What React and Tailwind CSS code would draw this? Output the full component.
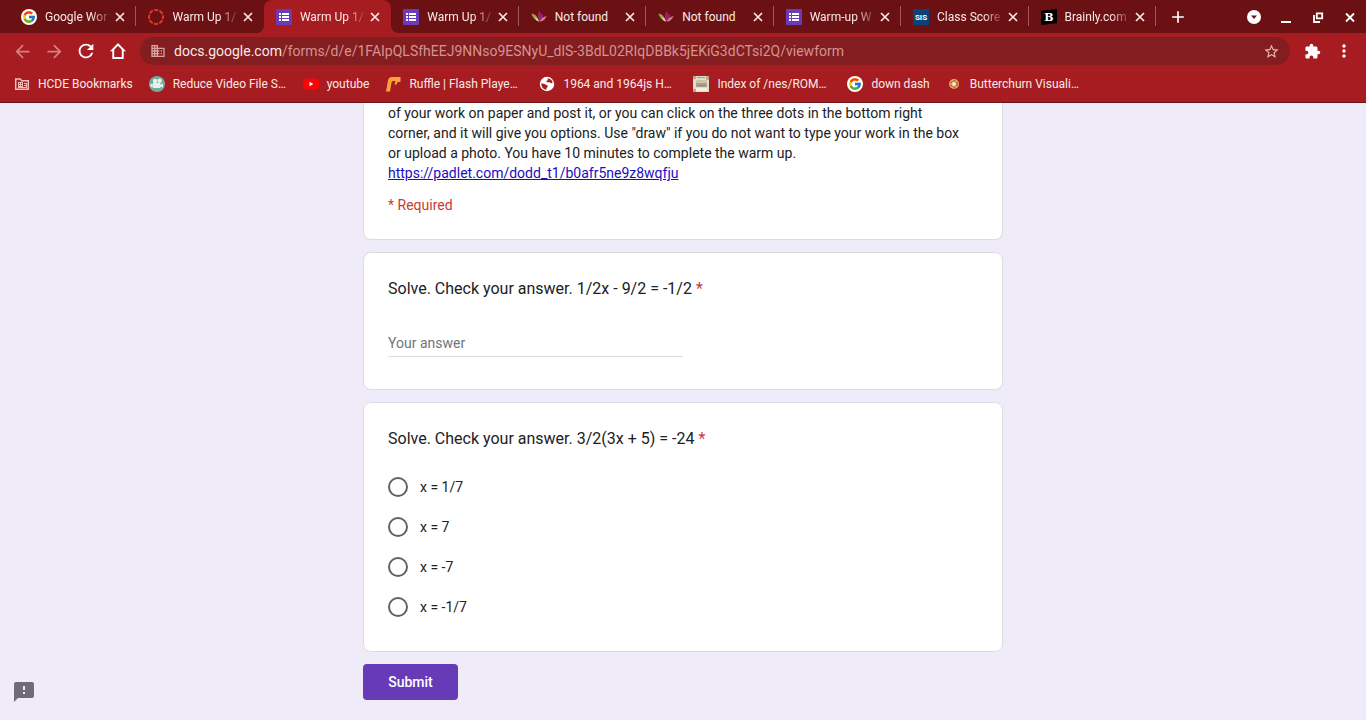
import { FcGoogle } from "react-icons/fc";
import {
  MdAdd,
  MdArrowBack,
  MdArrowForward,
  MdDomain,
  MdExtension,
  MdFeedback,
  MdMoreVert,
  MdRefresh,
  MdStarBorder,
} from "react-icons/md";

function GoogleIcon() {
  return (
    <span className="flex size-4 shrink-0 items-center justify-center rounded-full bg-white">
      <FcGoogle size={14} />
    </span>
  );
}

function CanvasIcon() {
  return (
    <svg viewBox="0 0 16 16" className="size-4 shrink-0" aria-hidden="true">
      <circle cx="8" cy="8" r="7" fill="none" stroke="#e2372f" strokeWidth="2" strokeDasharray="4.2 1.3" strokeDashoffset="2.1" />
    </svg>
  );
}

function FormsIcon() {
  return (
    <svg viewBox="0 0 16 16" className="size-4 shrink-0" aria-hidden="true">
      <rect width="16" height="16" rx="1" fill="#6a3ab8" />
      <path fill="#fff" d="M3 4h2v2H3zM6 4h7v2H6zM3 7h2v2H3zM6 7h7v2H6zM3 10h2v2H3zM6 10h7v2H6z" />
    </svg>
  );
}

function LotusIcon() {
  return (
    <svg viewBox="0 0 16 16" className="size-4 shrink-0" aria-hidden="true">
      <path fill="#9aa84a" d="M.5 4.500C4 5 6.500 7.500 8 12.500 4.500 11.500 1.500 8.500.5 4.500z" />
      <path fill="#e3d3b0" d="M4 8.500c2 .3 3.500 1.800 4 4-2-.4-3.500-1.800-4-4z" />
      <path fill="#b01762" d="M8.300 2c2.700 2.500 3 6.500.2 10.500C6.300 9 6.300 5.500 8.300 2z" />
      <path fill="#7d2a80" d="M11.500 4.500c1 3-.2 6.500-3 8 0-3.500.8-6 3-8z" />
      <path fill="#d9738c" d="M15.500 7c-1 3.500-3.500 5.500-7 5.500C10 9.500 12.300 7.500 15.500 7z" />
    </svg>
  );
}

function SisIcon() {
  return (
    <svg viewBox="0 0 16 16" className="size-4 shrink-0" aria-hidden="true">
      <rect width="16" height="16" fill="#0b4378" />
      <text x="8" y="11" textAnchor="middle" fill="#fff" fontSize="8" fontWeight="700" fontFamily="Roboto, sans-serif">SIS</text>
    </svg>
  );
}

function BrainlyIcon() {
  return (
    <svg viewBox="0 0 16 16" className="size-4 shrink-0" aria-hidden="true">
      <path fill="#000" d="M0 1.800L16 0v14.200L0 16z" />
      <text x="8" y="12" textAnchor="middle" fill="#fff" fontSize="11" fontWeight="700" fontFamily="DejaVu Serif, serif">B</text>
    </svg>
  );
}

function CloseIcon() {
  return (
    <svg viewBox="0 0 16 16" className="size-4" aria-hidden="true">
      <path d="M4 4l8 8M12 4l-8 8" stroke="currentColor" strokeWidth="1.700" />
    </svg>
  );
}

function FolderIcon() {
  return (
    <svg viewBox="0 0 16 16" className="size-4 shrink-0" aria-hidden="true">
      <path fill="none" stroke="#f0bfb9" strokeWidth="1.500" d="M1.700 3h4.500l1.500 1.700h6.600v8.600H1.700z" />
      <path fill="#f0bfb9" d="M4 6h5v6H4z" />
      <path fill="#a61c20" d="M5 7h1v1H5zM7 7h1v1H7zM5 9h1v1H5zM7 9h1v1H7z" />
      <path fill="#f0bfb9" d="M10 7h3v1h-3zM10 9h3v1h-3zM9 11h4v1H9zM12 7h1v5h-1z" />
    </svg>
  );
}

function VideoIcon() {
  return (
    <svg viewBox="0 0 16 16" className="size-4 shrink-0" aria-hidden="true">
      <circle cx="8" cy="8" r="8" fill="#6fae9c" />
      <circle cx="6" cy="5" r="2.200" fill="#e9f3ee" />
      <circle cx="10.500" cy="4.800" r="2.200" fill="#e9f3ee" />
      <rect x="3.500" y="7" width="8" height="5" rx="1" fill="#e9f3ee" />
      <path fill="#e9f3ee" d="M11 9l3-1.500v4L11 10.500zM1.500 7.500l2 1v2l-2 .8z" />
    </svg>
  );
}

function YoutubeIcon() {
  return (
    <svg viewBox="0 0 16 16" className="size-4 shrink-0" aria-hidden="true">
      <rect y="2.500" width="16" height="11" rx="3" fill="#fa0505" />
      <path fill="#fff" d="M6.500 5.800v4.400L10.300 8z" />
    </svg>
  );
}

function RuffleIcon() {
  return (
    <svg viewBox="0 0 16 16" className="size-4 shrink-0" aria-hidden="true">
      <path fill="#f9a43a" d="M1 15.500L3 4.500Q3.500 1 7 1h8.500v5h-3l-.7 2.500H9.500L10.500 5H8Q6.800 5 6.500 6.500L5 15.500z" />
    </svg>
  );
}

function GlobeIcon() {
  return (
    <svg viewBox="0 0 16 16" className="size-4 shrink-0" aria-hidden="true">
      <circle cx="8" cy="8" r="7.200" fill="#fff" />
      <path fill="#a61c20" d="M8.500 2.200c2.500.2 4.500 1.800 5.200 4-.8 1.400-2.200 1-2.700.3-.8-.9-2 .3-3.200-.4-.9-.7-.2-1.500.5-1.700.8-.3.500-1.200.2-2.200zM2.200 7.500c1.500 0 3.300.2 4.300 1 .8.7 2 .5 2.300 1.500.2 1-1 1.300-1.200 2.200-.1.700-.4 1.200-.8 1.500C4.200 13.200 2.200 10.800 2.200 7.500z" />
    </svg>
  );
}

function NesIcon() {
  return (
    <svg viewBox="0 0 16 16" className="size-4 shrink-0" aria-hidden="true">
      <rect width="16" height="16" fill="#e4dccb" />
      <path fill="#b9a98c" d="M0 0h3v3H0zM13 0h3v4h-3zM0 13h3v3H0z" />
      <path fill="#c98a78" d="M4 1h8v1H4z" />
      <rect x="3" y="4" width="11" height="4" rx="1" fill="#c9c3ab" />
      <rect x="3" y="7" width="11" height="4" fill="#a9a287" />
      <path stroke="#b8795e" strokeWidth="1" d="M5 9.500h7" />
      <path fill="#f3efe4" d="M3 12h11v3H3z" />
    </svg>
  );
}

function ButterchurnIcon() {
  return (
    <svg viewBox="0 0 16 16" className="size-4 shrink-0" aria-hidden="true">
      <circle cx="8" cy="8" r="5" fill="#e0a66a" />
      <circle cx="8" cy="8" r="3.200" fill="none" stroke="#8d3b22" strokeWidth="1" strokeDasharray="2 1.500" />
      <circle cx="8" cy="8" r="1.800" fill="#fff0d0" />
    </svg>
  );
}

const tabs = [
  { title: "Google Wor", Icon: GoogleIcon, fade: true },
  { title: "Warm Up 1/", Icon: CanvasIcon, fade: true },
  { title: "Warm Up 1/", Icon: FormsIcon, fade: true, active: true },
  { title: "Warm Up 1/", Icon: FormsIcon, fade: true },
  { title: "Not found", Icon: LotusIcon },
  { title: "Not found", Icon: LotusIcon },
  { title: "Warm-up W", Icon: FormsIcon, fade: true },
  { title: "Class Score", Icon: SisIcon, fade: true },
  { title: "Brainly.com", Icon: BrainlyIcon, fade: true },
];

const bookmarks = [
  { title: "HCDE Bookmarks", Icon: FolderIcon },
  { title: "Reduce Video File S…", Icon: VideoIcon, long: true },
  { title: "youtube", Icon: YoutubeIcon },
  { title: "Ruffle | Flash Playe…", Icon: RuffleIcon, long: true },
  { title: "1964 and 1964js H…", Icon: GlobeIcon, long: true },
  { title: "Index of /nes/ROM…", Icon: NesIcon, long: true },
  { title: "down dash", Icon: GoogleIcon },
  { title: "Butterchurn Visuali…", Icon: ButterchurnIcon, long: true },
];

const options = ["x = 1/7", "x = 7", "x = -7", "x = -1/7"];

function Tab({ title, Icon, fade, active, divider }) {
  return (
    <div
      className={
        active
          ? "relative flex min-w-0 flex-1 items-center rounded-t-lg bg-[#a61c20] pr-2 pl-3"
          : "relative flex min-w-0 flex-1 items-center pr-2 pl-3"
      }
    >
      {active && (
        <>
          <span className="absolute bottom-0 -left-2 size-2 bg-[radial-gradient(circle_at_0_0,transparent_8px,#a61c20_8px)]" />
          <span className="absolute -right-2 bottom-0 size-2 bg-[radial-gradient(circle_at_100%_0,transparent_8px,#a61c20_8px)]" />
        </>
      )}
      <Icon />
      <span
        className={
          fade
            ? "ml-2 min-w-0 flex-1 overflow-hidden text-[12px] leading-4 whitespace-nowrap [mask-image:linear-gradient(to_right,black_68%,transparent)]"
            : "ml-2 min-w-0 flex-1 overflow-hidden text-[12px] leading-4 whitespace-nowrap"
        }
      >
        {title}
      </span>
      <button type="button" aria-label="Close tab" className="shrink-0">
        <CloseIcon />
      </button>
      {divider && <span className="absolute top-1.5 right-0 h-5 w-px bg-[#9c5a58]" />}
    </div>
  );
}

function IconButton({ label, dim, children }) {
  return (
    <button
      type="button"
      aria-label={label}
      className={
        dim
          ? "flex size-6 shrink-0 items-center justify-center text-[#d4817e]"
          : "flex size-6 shrink-0 items-center justify-center text-white"
      }
    >
      {children}
    </button>
  );
}

function BrowserChrome() {
  return (
    <header className="border-b border-[#6e1416] bg-[#a61c20] text-[#fbe9e7]">
      <div className="flex h-[33px] bg-[#6b1113]">
        <div className="flex min-w-0 flex-1 pl-[9px]">
          {tabs.map((tab, i) => (
            <Tab key={i} {...tab} divider={!tab.active && !tabs[i + 1]?.active} />
          ))}
        </div>
        <div className="flex w-[210px] shrink-0 items-center pr-1 pl-2.5">
          <IconButton label="New tab">
            <MdAdd size={20} />
          </IconButton>
          <div className="ml-auto flex gap-2">
            <IconButton label="Search tabs">
              <svg viewBox="0 0 14 14" className="size-3.5" aria-hidden="true">
                <circle cx="7" cy="7" r="7" fill="#fff" />
                <path d="M4 5.500h6L7 9z" fill="#6b1113" />
              </svg>
            </IconButton>
            <IconButton label="Minimize">
              <svg viewBox="0 0 16 16" className="size-4" aria-hidden="true">
                <path d="M3 12h10v2H3z" fill="currentColor" />
              </svg>
            </IconButton>
            <IconButton label="Restore">
              <svg viewBox="0 0 16 16" className="size-4" aria-hidden="true">
                <path d="M6.800 4.300h5.400v5H6.800zM4 6v7h6" fill="none" stroke="currentColor" strokeWidth="1.800" />
              </svg>
            </IconButton>
            <IconButton label="Close window">
              <svg viewBox="0 0 16 16" className="size-4" aria-hidden="true">
                <path d="M4 4.500l8 8M12 4.500l-8 8" stroke="currentColor" strokeWidth="1.800" />
              </svg>
            </IconButton>
          </div>
        </div>
      </div>

      <div className="flex h-9 items-center gap-2.5 px-2.5">
        <div className="flex shrink-0 gap-2">
          <IconButton label="Back" dim>
            <MdArrowBack size={21} />
          </IconButton>
          <IconButton label="Forward" dim>
            <MdArrowForward size={21} />
          </IconButton>
          <IconButton label="Reload">
            <MdRefresh size={22} />
          </IconButton>
          <IconButton label="Home">
            <svg viewBox="0 0 16 16" className="size-4" aria-hidden="true">
              <path fill="currentColor" fillRule="evenodd" d="M8 0L0 8.300h2.300V16h11.400V8.300H16zM8 2.800l3.800 4V14.100H4.200V6.800z" />
            </svg>
          </IconButton>
        </div>
        <div className="flex h-7 min-w-0 flex-1 items-center rounded-full bg-[#841d1f] px-2.5">
          <MdDomain size={16} className="shrink-0 text-[#d9a3a0]" />
          <p className="ml-2 min-w-0 flex-1 truncate text-[14px] leading-5 text-[#d59391]">
            <span className="text-[#fbe9e7]">docs.google.com</span>
            /forms/d/e/1FAIpQLSfhEEJ9NNso9ESNyU_dlS-3BdL02RIqDBBk5jEKiG3dCTsi2Q/viewform
          </p>
          <button type="button" aria-label="Bookmark this page" className="shrink-0 text-[#e8b5b2]">
            <MdStarBorder size={17} />
          </button>
        </div>
        <div className="flex shrink-0 gap-2">
          <IconButton label="Extensions">
            <MdExtension size={17} />
          </IconButton>
          <IconButton label="Menu">
            <MdMoreVert size={20} />
          </IconButton>
        </div>
      </div>

      <nav aria-label="Bookmarks" className="flex h-[33px] items-center gap-4 overflow-hidden pb-[3px] pl-3.5 text-[12px] leading-4">
        {bookmarks.map(({ title, Icon, long }) => (
          <a
            key={title}
            href="#"
            className={long ? "flex w-[138px] shrink-0 items-center gap-2 whitespace-nowrap" : "flex shrink-0 items-center gap-2"}
          >
            <Icon />
            {title}
          </a>
        ))}
      </nav>
    </header>
  );
}

export default function App() {
  return (
    <div className="min-h-screen bg-[#f0ebf8] text-[14px] leading-5 text-[#202124] [font-family:Roboto,sans-serif]">
      <BrowserChrome />

      <form className="mx-auto flex max-w-[640px] flex-col gap-3 pb-5" onSubmit={(e) => e.preventDefault()}>
        <section className="rounded-b-lg border border-t-0 border-[#dadce0] bg-white px-6 pb-6">
          <p>
            of your work on paper and post it, or you can click on the three dots in the bottom right
            <br />
            corner, and it will give you options. Use "draw" if you do not want to type your work in the box
            <br />
            or upload a photo. You have 10 minutes to complete the warm up.
            <br />
            <a href="https://padlet.com/dodd_t1/b0afr5ne9z8wqfju" className="text-[#1a0dc4] underline">
              https://padlet.com/dodd_t1/b0afr5ne9z8wqfju
            </a>
          </p>
          <p className="mt-3 text-[#c93a31]">* Required</p>
        </section>

        <section className="rounded-lg border border-[#dadce0] bg-white px-6 pt-6 pb-8">
          <label htmlFor="answer" className="block text-[16px] leading-6">
            Solve. Check your answer. 1/2x - 9/2 = -1/2 <span className="text-[#c93a31]">*</span>
          </label>
          <input
            id="answer"
            type="text"
            placeholder="Your answer"
            className="mt-8 block h-6 w-1/2 border-b border-[#dadce0] pb-1 leading-5 outline-none placeholder:text-[#70757a]"
          />
        </section>

        <fieldset className="rounded-lg border border-[#dadce0] bg-white px-6 py-6">
          <legend className="float-left w-full text-[16px] leading-6">
            Solve. Check your answer. 3/2(3x + 5) = -24 <span className="text-[#c93a31]">*</span>
          </legend>
          <div className="clear-both pt-4">
            {options.map((option) => (
              <label key={option} className="flex h-10 items-center gap-3">
                <input
                  type="radio"
                  name="solution"
                  value={option}
                  className="size-5 appearance-none rounded-full border-2 border-[#5f6368] checked:border-[6px] checked:border-[#673ab7]"
                />
                {option}
              </label>
            ))}
          </div>
        </fieldset>

        <button type="submit" className="h-9 min-w-[95px] self-start rounded bg-[#673ab7] px-6 text-[14px] font-medium text-white">
          Submit
        </button>
      </form>

      <button type="button" aria-label="Report a problem" className="fixed bottom-4 left-3 text-[#6f6b77]">
        <MdFeedback size={24} />
      </button>
    </div>
  );
}
